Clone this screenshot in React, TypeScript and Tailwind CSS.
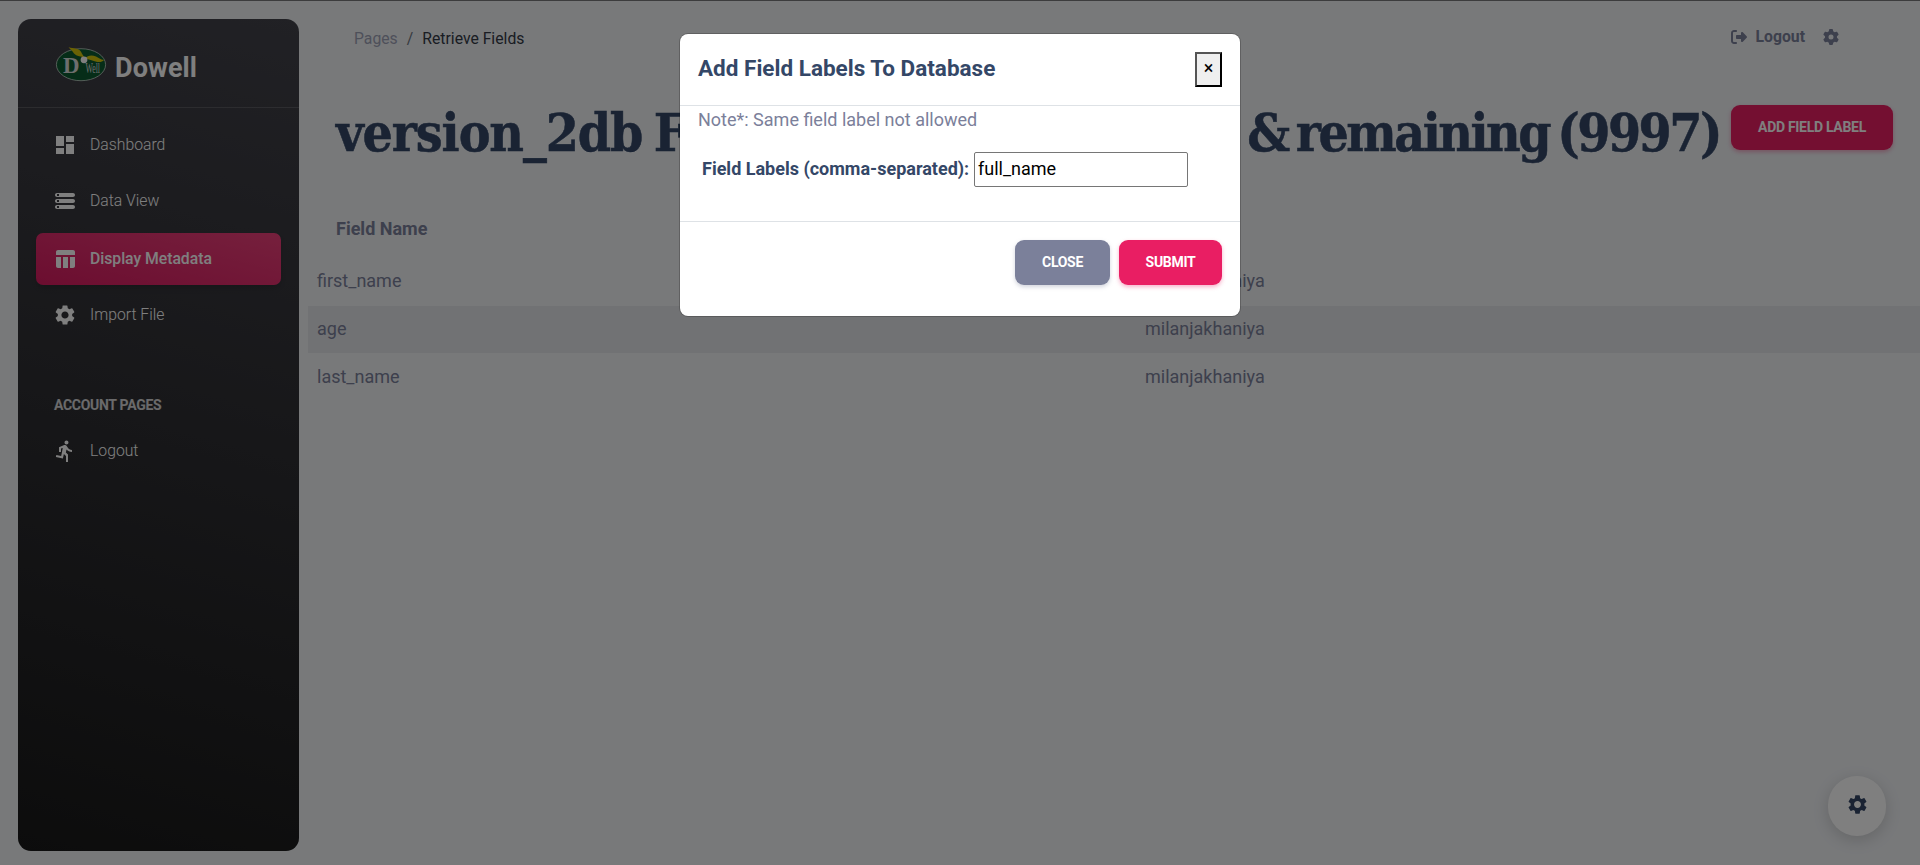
import type { ReactNode } from "react";
import { MdDashboard, MdDirectionsRun, MdSettings } from "react-icons/md";
import { FaGear, FaRightFromBracket } from "react-icons/fa6";

function Logo() {
  return (
    <svg width="52" height="36" viewBox="0 0 52 36" className="shrink-0 overflow-visible">
      <ellipse cx="26" cy="18.7" rx="24.6" ry="16" fill="#0c5a30" stroke="#c9d6cd" strokeWidth="0.8" />
      <path d="M13.5 1.2c5 1.2 11.5 0.5 13.5 6.5l2.3 3.5c-5-1-9-1-11.5-5.5z" fill="#d5c50a" />
      <path d="M30 12.5c3-3.5 7-3.5 11-2 2.5 1 4.5 3 8 3.5-2 2.5-5.500 2.300-8.500 1.500-3.500-1-6-2-10.500-3z" fill="#d5c50a" />
      <circle cx="29" cy="13.8" r="3.4" fill="#fff" />
      <text x="8" y="27.2" fontFamily="Liberation Serif, serif" fontWeight="700" fontSize="24" textLength="16.5" lengthAdjust="spacingAndGlyphs" fill="#ddd">D</text>
      <text x="30.5" y="26.8" fontFamily="Liberation Serif, serif" fontSize="14.5" textLength="14.5" lengthAdjust="spacingAndGlyphs" fill="#ddd">Well</text>
    </svg>
  );
}

function StorageIcon() {
  return (
    <svg width="24" height="24" viewBox="0 0 24 24" fill="currentColor">
      <path fillRule="evenodd" d="M4 20h16c1.1 0 2-.9 2-2s-.9-2-2-2H4c-1.1 0-2 .9-2 2s.9 2 2 2zm0-3h2v2H4v-2zM2 6c0 1.1.9 2 2 2h16c1.1 0 2-.9 2-2s-.9-2-2-2H4c-1.1 0-2 .9-2 2zm4 1H4V5h2v2zM4 14h16c1.1 0 2-.9 2-2s-.9-2-2-2H4c-1.1 0-2 .9-2 2s.9 2 2 2zm0-3h2v2H4v-2z" />
    </svg>
  );
}

function TableIcon() {
  return (
    <svg width="24" height="24" viewBox="0 0 24 24" fill="currentColor">
      <path d="M10 10.02h5V21h-5V10.02zM17 21h3c1.1 0 2-.9 2-2v-9h-5v11zm3-18H5c-1.1 0-2 .9-2 2v3h19V5c0-1.1-.9-2-2-2zM3 19c0 1.1.9 2 2 2h3V10H3v9z" />
    </svg>
  );
}

function NavItem({ icon, label, active = false }: { icon: ReactNode; label: string; active?: boolean }) {
  return (
    <a
      className={
        active
          ? "mx-[18px] flex h-[52px] items-center rounded-[7px] bg-[linear-gradient(195deg,#ec407a,#d81b60)] pl-[17px] text-[15.75px] font-medium tracking-[-0.03px] text-white shadow-md"
          : "mx-[18px] flex h-[52px] items-center pl-[17px] text-[15.75px] font-light text-white"
      }
    >
      <span className="flex w-[24px] justify-center text-[24px]">{icon}</span>
      <span className="ml-[13px]">{label}</span>
    </a>
  );
}

function Sidebar() {
  return (
    <aside className="ml-[18px] mt-[19px] h-[832px] w-[281px] shrink-0 rounded-[13px] bg-[linear-gradient(195deg,#42424a,#191919)]">
      <div className="flex h-[89px] items-start border-b border-white/15 pl-[37px] pt-[27px]">
        <Logo />
        <span className="ml-[8px] mt-[2px] text-[27px] leading-[40px] font-bold tracking-[0.1px] text-white">Dowell</span>
      </div>
      <nav className="flex flex-col pt-[11px]">
        <NavItem icon={<MdDashboard />} label="Dashboard" />
        <div className="mt-[4px]"><NavItem icon={<StorageIcon />} label="Data View" /></div>
        <div className="mt-[6px]"><NavItem icon={<TableIcon />} label="Display Metadata" active /></div>
        <div className="mt-[4px]"><NavItem icon={<MdSettings />} label="Import File" /></div>
        <h6 className="mt-[54px] ml-[36px] text-[14px] leading-[20px] font-bold tracking-[-0.3px] text-white/80">ACCOUNT PAGES</h6>
        <div className="mt-[10px]"><NavItem icon={<MdDirectionsRun />} label="Logout" /></div>
      </nav>
    </aside>
  );
}

const rows = ["first_name", "age", "last_name"];

function FieldTable() {
  return (
    <div className="flex flex-col text-[18px] leading-[27px] text-[#7b809a]">
      <div className="flex h-[58px] items-center pb-[2px] pl-[28px] font-bold">Field Name</div>
      {rows.map((name, i) => (
        <div key={name} className={i === 1 ? "mb-px flex h-[47px] items-center bg-black/5 pb-[2px] pl-[9px]" : "flex h-[48px] items-center pb-[3px] pl-[9px]"}>
          <span className="w-[828px]">{name}</span>
          <span>milanjakhaniya</span>
        </div>
      ))}
    </div>
  );
}

function Modal() {
  return (
    <div className="absolute left-[680px] top-[34px] flex h-[282px] w-[560px] flex-col rounded-[8px] bg-white shadow-[0_0_0_1px_rgba(0,0,0,0.2)]">
      <div className="flex h-[72px] items-start justify-between border-b border-[#dee2e6] px-[18px] pt-[18px]">
        <h5 className="text-[22.5px] leading-[32px] font-bold text-[#344767]">Add Field Labels To Database</h5>
        <button className="h-[35px] w-[27px] border-2 border-black border-t-[#555] border-l-[#555] bg-[#efefef] pb-[3px] text-[18px] leading-[28px] font-normal text-black">×</button>
      </div>
      <p className="pl-[18px] text-[18px] leading-[28px] text-[#7b809a]">Note*: Same field label not allowed</p>
      <div className="mt-[18px] flex items-center pl-[22px]">
        <label className="w-[272px] pb-[2px] text-[18px] font-bold whitespace-nowrap text-[#344767]">Field Labels (comma-separated):</label>
        <input defaultValue="full_name" className="h-[35px] w-[214px] rounded-[2px] border border-[#767676] px-[3px] pb-[2px] text-[18px] text-black" />
      </div>
      <div className="mt-[34px] flex items-start justify-end gap-[9px] border-t border-[#dee2e6] pt-[18px] pr-[18px]">
        <button className="h-[45px] w-[95px] rounded-[9px] bg-[#7b809a] text-[14px] font-bold tracking-[-0.3px] text-white shadow-[0_2px_4px_rgba(123,128,154,0.35)]">CLOSE</button>
        <button className="h-[45px] w-[103px] rounded-[9px] bg-[#e91e63] text-[14px] font-bold tracking-[-0.3px] text-white shadow-[0_2px_4px_rgba(233,30,99,0.35)]">SUBMIT</button>
      </div>
    </div>
  );
}

export default function App() {
  return (
    <div className="relative flex h-[865px] w-full overflow-hidden bg-[#f0f2f5] font-['Roboto',sans-serif]">
      <Sidebar />
      <main className="ml-[9px] flex min-w-0 flex-1 flex-col">
        <header className="flex h-[76px] items-center justify-between pl-[46px] pr-[81px] text-[15.75px]">
          <div className="flex items-center pt-[2px]">
            <span className="text-[#7b809a] opacity-70">Pages</span>
            <span className="px-[9px] text-[#6c757d]">/</span>
            <span className="text-[#343a46]">Retrieve Fields</span>
          </div>
          <div className="mb-[3px] flex items-center font-bold text-[#7b809a]">
            <FaRightFromBracket className="text-[16px]" />
            <span className="ml-[9px]">Logout</span>
            <FaGear className="ml-[18px] text-[16px]" />
          </div>
        </header>
        <div className="flex h-[124px] items-start pl-[28px] pr-[27px] pt-[20px]">
          <h1 className="flex w-[1386px] justify-between font-['Roboto_Slab','DejaVu_Serif_Condensed','DejaVu_Serif',serif] text-[53px] leading-[72px] font-bold whitespace-nowrap text-[#344767] [-webkit-text-stroke:0.5px_#344767]">
            <span className="tracking-[-1.1px] [word-spacing:-4px]">version_2db Fields</span>
            <span className="mr-[2px] tracking-[-2.5px] [word-spacing:-6px]">&amp; remaining (9997)</span>
          </h1>
          <button className="mt-[9px] ml-[9px] h-[45px] w-[162px] shrink-0 rounded-[9px] bg-[#e91e63] text-[14px] font-bold tracking-[-0.3px] text-white shadow-[0_2px_4px_rgba(233,30,99,0.35)]">ADD FIELD LABEL</button>
        </div>
        <FieldTable />
      </main>
      <div className="absolute right-[34px] bottom-[29px] flex h-[60px] w-[58px] items-center justify-center rounded-full bg-white pb-[3px] text-[23px] text-[#344767] shadow-[0_4px_16px_rgba(0,0,0,0.16)]">
        <MdSettings />
      </div>
      <div className="absolute inset-0 border-t border-black/50 bg-black/50" />
      <Modal />
    </div>
  );
}
